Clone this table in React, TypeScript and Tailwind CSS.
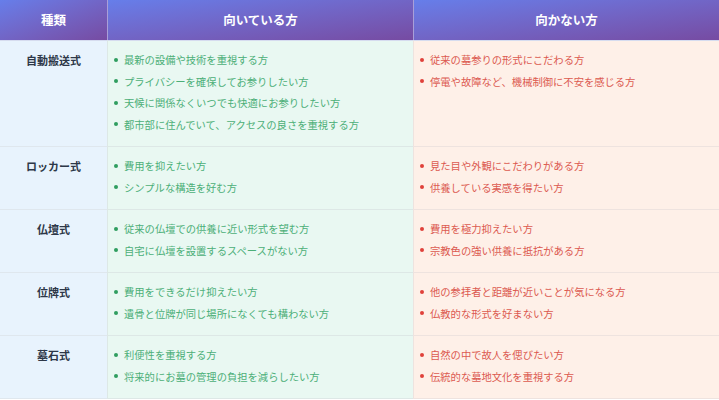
const rows = [
  {
    type: '自動搬送式',
    good: [
      '最新の設備や技術を重視する方',
      'プライバシーを確保してお参りしたい方',
      '天候に関係なくいつでも快適にお参りしたい方',
      '都市部に住んでいて、アクセスの良さを重視する方',
    ],
    bad: ['従来の墓参りの形式にこだわる方', '停電や故障など、機械制御に不安を感じる方'],
  },
  {
    type: 'ロッカー式',
    good: ['費用を抑えたい方', 'シンプルな構造を好む方'],
    bad: ['見た目や外観にこだわりがある方', '供養している実感を得たい方'],
  },
  {
    type: '仏壇式',
    good: ['従来の仏壇での供養に近い形式を望む方', '自宅に仏壇を設置するスペースがない方'],
    bad: ['費用を極力抑えたい方', '宗教色の強い供養に抵抗がある方'],
  },
  {
    type: '位牌式',
    good: ['費用をできるだけ抑えたい方', '遺骨と位牌が同じ場所になくても構わない方'],
    bad: ['他の参拝者と距離が近いことが気になる方', '仏教的な形式を好まない方'],
  },
  {
    type: '墓石式',
    good: ['利便性を重視する方', '将来的にお墓の管理の負担を減らしたい方'],
    bad: ['自然の中で故人を偲びたい方', '伝統的な墓地文化を重視する方'],
  },
];

function ItemList({ items, tone }: { items: string[]; tone: 'good' | 'bad' }) {
  return (
    <ul className="m-0 p-0 list-none">
      {items.map((t) => (
        <li key={t} className="flex items-center h-[21.5px] whitespace-nowrap">
          <span
            className={`w-[4px] h-[4px] rounded-full mr-[6px] ml-[6px] ${
              tone === 'good' ? 'bg-[#2f9e5f]' : 'bg-[#e0413a]'
            }`}
          />
          <span className={tone === 'good' ? 'text-[#4caf78]' : 'text-[#dc5a50]'}>{t}</span>
        </li>
      ))}
    </ul>
  );
}

export default function App() {
  return (
    <div
      className="w-[719px] h-[400px] bg-white overflow-hidden"
      style={{ fontFamily: '"Noto Sans CJK JP", "Noto Sans", sans-serif' }}
    >
      <div className="grid grid-cols-[107px_306px_306px]">
        {/* Header */}
        {['種類', '向いている方', '向かない方'].map((h, i) => (
          <div
            key={h}
            className={`h-[40px] flex items-center justify-center bg-gradient-to-br from-[#667eea] to-[#764ba2] text-white font-bold text-[12.5px] ${
              i > 0 ? 'border-l border-[#a99fd8]' : ''
            }`}
          >
            {h}
          </div>
        ))}

        {/* Body */}
        {rows.map((r, idx) => (
          <div key={r.type} className="contents">
            <div
              className={`bg-[#e8f3fd] border-b border-[#dfe7ee] pt-[8px] pb-[11px] flex justify-center ${
                idx === 0 ? 'border-t border-t-[#d6dcef]' : ''
              }`}
            >
              <span className="font-bold text-[11px] text-[#2d3748] h-[21.5px] flex items-center">{r.type}</span>
            </div>
            <div
              className={`bg-[#e9f8f2] border-b border-l border-[#dde8e6] pt-[8px] pb-[11px] text-[10.3px] ${
                idx === 0 ? 'border-t border-t-[#d6dcef]' : ''
              }`}
            >
              <ItemList items={r.good} tone="good" />
            </div>
            <div
              className={`bg-[#fef0e8] border-b border-l border-[#eee3df] pt-[8px] pb-[11px] text-[10.3px] ${
                idx === 0 ? 'border-t border-t-[#d6dcef]' : ''
              }`}
            >
              <ItemList items={r.bad} tone="bad" />
            </div>
          </div>
        ))}
      </div>
    </div>
  );
}
